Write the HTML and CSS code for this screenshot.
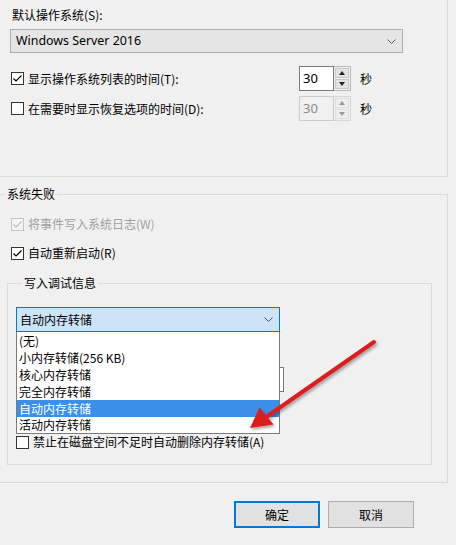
FILE: index.html
```html
<!DOCTYPE html>
<html lang="zh-CN">
<head>
<meta charset="utf-8">
<title>启动和故障恢复</title>
<link rel="stylesheet" href="styles.css">
</head>
<body>
<div class="dialog">
  <div class="group g1">
    <div class="lbl">默认操作系统(S):</div>
    <div class="combo os">
      <span class="combo-text latin">Windows Server 2016</span>
      <svg class="chev" width="9" height="5" viewBox="0 0 9 5"><path d="M0.5 0.5 L4.5 4.5 L8.5 0.5" fill="none" stroke="#555" stroke-width="1"/></svg>
    </div>
    <div class="row r1">
      <div class="opt">
        <span class="cb"><svg width="11" height="11" viewBox="0 0 11 11"><path d="M1.5 5.5 L4 8 L9.5 2.5" fill="none" stroke="#000" stroke-width="1.2"/></svg></span>
        <span>显示操作系统列表的时间(T):</span>
      </div>
      <div class="spin">
        <span class="spin-val latin">30</span>
        <span class="spin-btns"><span class="sb up"></span><span class="sb down"></span></span>
      </div>
      <span class="unit">秒</span>
    </div>
    <div class="row r2">
      <div class="opt">
        <span class="cb"></span>
        <span>在需要时显示恢复选项的时间(D):</span>
      </div>
      <div class="spin disabled">
        <span class="spin-val latin">30</span>
        <span class="spin-btns"><span class="sb up"></span><span class="sb down"></span></span>
      </div>
      <span class="unit">秒</span>
    </div>
  </div>

  <div class="group g2">
    <div class="gtitle">系统失败</div>
    <div class="check c1 disabled">
      <span class="cb"><svg width="11" height="11" viewBox="0 0 11 11"><path d="M1.5 5.5 L4 8 L9.5 2.5" fill="none" stroke="#bdbdbd" stroke-width="1.2"/></svg></span>
      <span>将事件写入系统日志(W)</span>
    </div>
    <div class="check c2">
      <span class="cb"><svg width="11" height="11" viewBox="0 0 11 11"><path d="M1.5 5.5 L4 8 L9.5 2.5" fill="none" stroke="#000" stroke-width="1.2"/></svg></span>
      <span>自动重新启动(R)</span>
    </div>
    <div class="group inner">
      <div class="gtitle">写入调试信息</div>
      <div class="combo-wrap">
        <div class="combo dump">
          <span class="combo-text">自动内存转储</span>
          <svg class="chev" width="9" height="5" viewBox="0 0 9 5"><path d="M0.5 0.5 L4.5 4.5 L8.5 0.5" fill="none" stroke="#555" stroke-width="1"/></svg>
        </div>
        <ul class="dd-list">
          <li>(无)</li>
          <li>小内存转储(256 KB)</li>
          <li>核心内存转储</li>
          <li>完全内存转储</li>
          <li class="sel">自动内存转储</li>
          <li>活动内存转储</li>
        </ul>
      </div>
      <div class="dumpfile"></div>
      <div class="check c3">
        <span class="cb"></span>
        <span>禁止在磁盘空间不足时自动删除内存转储(A)</span>
      </div>
    </div>
  </div>

  <div class="buttons">
    <button class="btn default">确定</button>
    <button class="btn">取消</button>
  </div>

  <svg class="arrow" width="456" height="545" viewBox="0 0 456 545">
    <defs>
      <filter id="sh" x="-20%" y="-20%" width="140%" height="140%">
        <feDropShadow dx="1.5" dy="2" stdDeviation="1.5" flood-color="#000" flood-opacity="0.35"/>
      </filter>
    </defs>
    <g filter="url(#sh)">
      <line x1="374" y1="342" x2="262" y2="420" stroke="#dd1f1f" stroke-width="4" stroke-linecap="round"/>
      <polygon points="250,428 259.5,407.5 273.5,424.5" fill="#dd1f1f"/>
    </g>
  </svg>
</div>
</body>
</html>
```

FILE: styles.css
```css
* { box-sizing: border-box; }

html, body {
  margin: 0;
  padding: 0;
  background: #f0f0f0;
}

.dialog {
  position: relative;
  width: 456px;
  height: 545px;
  overflow: hidden;
  background: #f0f0f0;
  font-family: "Noto Sans CJK SC", "Noto Sans", sans-serif;
  font-size: 12px;
  line-height: 16px;
  color: #000;
}

.latin {
  font-family: "Noto Sans", "Open Sans", sans-serif;
}

.group {
  border: 1px solid #dadada;
}

.g1 {
  margin: -20px 0 0 -5px;
  width: 453px;
  padding: 26px 0 55px 15px;
}

.lbl {
  line-height: 16px;
  padding-left: 1px;
}

.combo {
  position: relative;
  display: flex;
  align-items: center;
  justify-content: space-between;
}

.combo.os {
  margin: 6px 0 0 -1px;
  width: 393px;
  height: 24px;
  border: 1px solid #adadad;
  background: #e5e5e5;
  padding: 0 6px 0 5px;
}

.combo.os .combo-text {
  font-size: 12.4px;
}

.chev {
  display: block;
}

.row {
  display: flex;
  align-items: center;
  height: 25px;
}

.r1 { margin-top: 13px; }
.r2 { margin-top: 5px; }

.opt {
  width: 288px;
  display: flex;
  align-items: center;
}

.cb {
  width: 13px;
  height: 13px;
  border: 1px solid #333;
  background: #fff;
  margin-right: 4px;
  flex: none;
  display: flex;
  align-items: center;
  justify-content: center;
}

.spin {
  display: flex;
  width: 52px;
  height: 25px;
}

.spin-val {
  width: 35px;
  height: 25px;
  border: 1px solid #7a7a7a;
  background: #fff;
  font-size: 13px;
  line-height: 23px;
  padding-left: 3px;
}

.spin-btns {
  width: 17px;
  height: 25px;
  border: 1px solid #b9b9b9;
  border-left: none;
  display: flex;
  flex-direction: column;
  padding: 1px;
  gap: 1px;
  background: #f0f0f0;
}

.sb {
  flex: 1;
  background: #e3e3e3;
  border: 1px solid #c9c9c9;
  display: flex;
  align-items: center;
  justify-content: center;
}

.sb::after {
  content: "";
  width: 0;
  height: 0;
  border-left: 3px solid transparent;
  border-right: 3px solid transparent;
}

.sb.up::after { border-bottom: 4px solid #222; }
.sb.down::after { border-top: 4px solid #222; }

.spin.disabled .spin-val {
  border-color: #cccccc;
  background: #f0f0f0;
  color: #8d8d8d;
}

.spin.disabled .spin-btns { border-color: #d6d6d6; }
.spin.disabled .sb { background: #eeeeee; border-color: #dedede; }
.spin.disabled .sb.up::after { border-bottom-color: #9a9a9a; }
.spin.disabled .sb.down::after { border-top-color: #9a9a9a; }

.unit {
  margin-left: 9px;
}

.g2 {
  margin: 17px 0 0 -5px;
  width: 453px;
  padding: 0 0 17px 15px;
}

.gtitle {
  margin-top: -9px;
  line-height: 16px;
  padding: 0 2px;
  width: fit-content;
  background: #f0f0f0;
}

.g2 > .gtitle { margin-left: -6px; }

.check {
  display: flex;
  align-items: center;
  height: 16px;
}

.c1 { margin-top: 14px; }
.c2 { margin-top: 13px; }

.check.disabled { color: #a0a0a0; }
.check.disabled .cb {
  border-color: #c4c4c4;
  background: #f4f4f4;
}

.inner {
  margin: 22px 0 0 -4px;
  width: 425px;
  padding: 0 0 15px 8px;
}

.inner > .gtitle { margin-left: 6px; }

.combo-wrap {
  position: relative;
  margin-top: 16px;
  width: 264px;
  z-index: 2;
}

.combo.dump {
  width: 264px;
  height: 25px;
  border: 1px solid #0078d7;
  background: #cce4f7;
  padding: 0 6px 0 3px;
}

.dd-list {
  position: absolute;
  top: 100%;
  left: 0;
  width: 264px;
  margin: 0;
  padding: 0;
  list-style: none;
  background: #fff;
  border: 1px solid #7a7a7a;
  border-top: none;
}

.dd-list li {
  height: 17px;
  line-height: 17px;
  padding-left: 2px;
}

.dd-list li:last-child {
  height: 16px;
  line-height: 15px;
}

.dd-list li.sel {
  background: #3b8fe8;
  color: #fff;
}

.dumpfile {
  margin: 35px 0 0 68px;
  width: 200px;
  height: 25px;
  border: 1px solid #7a7a7a;
  background: #fff;
}

.c3 {
  margin-top: 43px;
  height: 14px;
  line-height: 14px;
}

.buttons {
  display: flex;
  justify-content: flex-end;
  gap: 8px;
  padding-right: 42px;
  margin-top: 18px;
}

.btn {
  width: 86px;
  height: 27px;
  border: 1px solid #adadad;
  background: #e1e1e1;
  font-family: "Noto Sans CJK SC", sans-serif;
  font-size: 12px;
  color: #000;
  padding: 0;
}

.btn.default {
  border: 2px solid #0078d7;
}

.arrow {
  position: absolute;
  left: 0;
  top: 0;
  pointer-events: none;
  z-index: 10;
}
```
